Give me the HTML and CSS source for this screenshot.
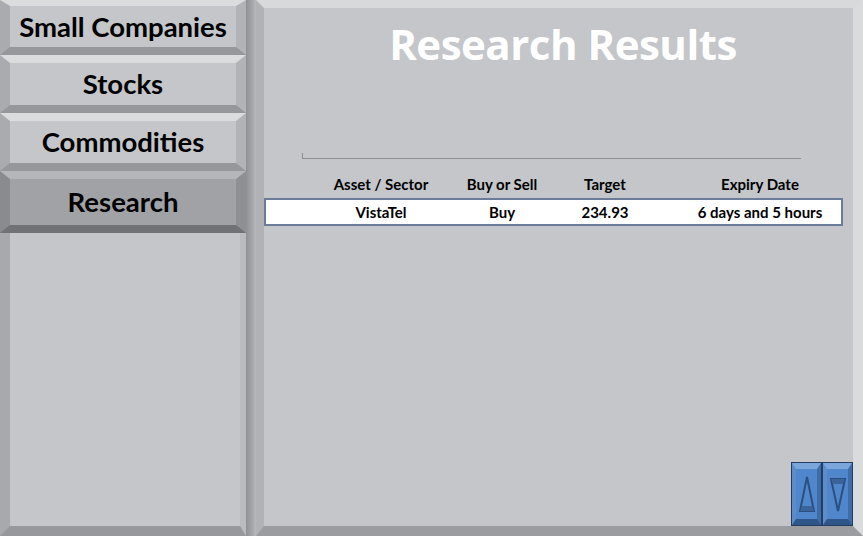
FILE: index.html
```html
<!DOCTYPE html>
<html lang="en">
<head>
  <meta charset="UTF-8" />
  <title>Research Results</title>
  <link rel="stylesheet" href="styles.css">
</head>
<body>
  <div class="sidebar">
    <div class="nav-btn first">Small Companies</div>
    <div class="nav-btn">Stocks</div>
    <div class="nav-btn">Commodities</div>
    <div class="nav-btn active">Research</div>
    <div class="sidebar-fill"></div>
  </div>
  <div class="divider"></div>
  <div class="main">
    <h1>Research Results</h1>
    <div class="rule"></div>
    <div class="table-head">
      <span>Asset / Sector</span>
      <span>Buy or Sell</span>
      <span>Target</span>
      <span>Expiry Date</span>
    </div>
    <div class="table-row">
      <span>VistaTel</span>
      <span>Buy</span>
      <span>234.93</span>
      <span>6 days and 5 hours</span>
    </div>
    <div class="scroller">
      <div class="scroll-btn">
        <svg width="20" height="46" viewBox="0 0 20 46"><polygon points="10,6 3,40 17,40" fill="none" stroke="#2c4f80" stroke-width="2"/><polygon points="5,35 15,35 17,40 3,40" fill="#3a639a"/></svg>
      </div>
      <div class="scroll-btn">
        <svg width="20" height="46" viewBox="0 0 20 46"><polygon points="3,8 17,8 10,40" fill="none" stroke="#2c4f80" stroke-width="2"/><polygon points="3,8 17,8 15,13 5,13" fill="#3a639a"/></svg>
      </div>
    </div>
  </div>
</body>
</html>
```

FILE: styles.css
```css
:root {
  --face: #c4c6c9;
  --face-dark: #a0a2a5;
  --text: #000;
}

* {
  box-sizing: border-box;
}

body {
  margin: 0;
  width: 863px;
  height: 536px;
  overflow: hidden;
  display: flex;
  font-family: "Lato", "Open Sans", sans-serif;
  background: var(--face);
}

.sidebar {
  width: 246px;
  flex-shrink: 0;
  display: flex;
  flex-direction: column;
}

.nav-btn {
  height: 58px;
  border-style: solid;
  border-width: 8px 10px 8px 10px;
  border-color: #dadcde #b1b3b6 #95979b #a9abae;
  background: var(--face);
  font-weight: bold;
  font-size: 27.5px;
  line-height: 42px;
  text-align: center;
  white-space: nowrap;
  color: var(--text);
}

.nav-btn.first {
  height: 55px;
  border-top-width: 6px;
  line-height: 41px;
}

.nav-btn.active {
  height: 62px;
  line-height: 46px;
  background: var(--face-dark);
  border-color: #b4b6b9 #8e9094 #707275 #898b8f;
}

.sidebar-fill {
  flex: 1;
  border-style: solid;
  border-width: 0 6px 10px 10px;
  border-color: transparent #b9bbbe #96989b #a7a9ac;
  background: var(--face);
}

.divider {
  width: 10px;
  flex-shrink: 0;
  background: linear-gradient(to right, #8f9195, #a3a5a8 60%, #b8babd);
}

.main {
  flex: 1;
  min-width: 0;
  overflow: hidden;
  position: relative;
  border-style: solid;
  border-width: 8px 10px 10px 8px;
  border-color: #d7d9db #d9dbdd #9a9c9f #b0b2b5;
  background: var(--face);
}

h1 {
  margin: 14px 0 0;
  padding-left: 9px;
  font-family: "Open Sans", sans-serif;
  font-size: 42px;
  font-weight: bold;
  line-height: 44px;
  color: #fff;
  text-align: center;
  letter-spacing: -0.5px;
}

.rule {
  margin: 87px 0 0 38px;
  width: 499px;
  height: 6px;
  border-left: 1px solid #8c8e92;
  border-bottom: 1px solid #8c8e92;
}

.table-head,
.table-row {
  display: grid;
  grid-template-columns: 120px 122px 84px 226px;
  font-size: 15px;
  font-weight: bold;
  text-align: center;
  white-space: nowrap;
}

.table-head {
  margin-top: 15px;
  padding-left: 57px;
  line-height: 20px;
}

.table-row {
  margin-top: 4px;
  width: 579px;
  height: 28px;
  line-height: 24px;
  padding-left: 55px;
  background: #fff;
  border: 2px solid #6b7c9b;
}

.scroller {
  position: absolute;
  right: 1px;
  bottom: 1px;
  display: flex;
  gap: 2px;
}

.scroll-btn {
  width: 29px;
  height: 62px;
  border-style: solid;
  border-width: 6px 4px 6px 4px;
  border-color: #7aa6dc #3f6ca8 #2f5689 #5d8cc8;
  background: #4f86cc;
  outline: 1px solid #243d63;
  display: flex;
  align-items: center;
  justify-content: center;
}
```
